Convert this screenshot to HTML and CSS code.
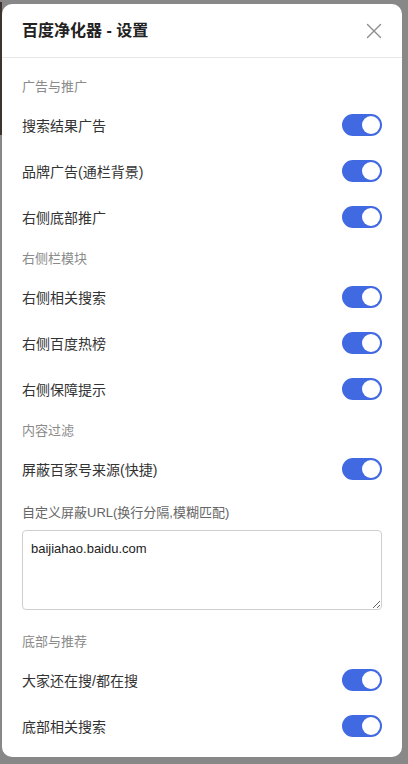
FILE: index.html
```html
<!DOCTYPE html>
<html lang="zh-CN">
<head>
    <meta charset="UTF-8">
    <meta name="viewport" content="width=device-width, initial-scale=1.0">
    <title>百度净化器 - 设置</title>
    <link rel="stylesheet" href="styles.css">
</head>
<body>
    <div class="modal">
        <div class="modal-header">
            <h1>百度净化器 - 设置</h1>
            <button class="close-btn" aria-label="关闭">
                <svg width="16" height="16" viewBox="0 0 16 16">
                    <path d="M1.5 1.5 L14.5 14.5 M14.5 1.5 L1.5 14.5" stroke="#8c8c8c" stroke-width="1.4" fill="none" stroke-linecap="round"/>
                </svg>
            </button>
        </div>

        <div class="modal-body">
            <div class="section-title">广告与推广</div>
            <div class="row"><span>搜索结果广告</span><span class="switch on"></span></div>
            <div class="row"><span>品牌广告(通栏背景)</span><span class="switch on"></span></div>
            <div class="row"><span>右侧底部推广</span><span class="switch on"></span></div>

            <div class="section-title">右侧栏模块</div>
            <div class="row"><span>右侧相关搜索</span><span class="switch on"></span></div>
            <div class="row"><span>右侧百度热榜</span><span class="switch on"></span></div>
            <div class="row"><span>右侧保障提示</span><span class="switch on"></span></div>

            <div class="section-title">内容过滤</div>
            <div class="row"><span>屏蔽百家号来源(快捷)</span><span class="switch on"></span></div>
            <label class="field-label" for="urls">自定义屏蔽URL(换行分隔,模糊匹配)</label>
            <textarea id="urls">baijiahao.baidu.com</textarea>

            <div class="section-title">底部与推荐</div>
            <div class="row"><span>大家还在搜/都在搜</span><span class="switch on"></span></div>
            <div class="row"><span>底部相关搜索</span><span class="switch on"></span></div>
        </div>
    </div>
</body>
</html>
```

FILE: styles.css
```css
body {
    margin: 0;
    font-family: "Liberation Sans", "Noto Sans CJK SC", sans-serif;
    background: linear-gradient(#3b3430, #3b3430) no-repeat 0 2px / 2px 133px, #888888;
    min-height: 764px;
    overflow: hidden;
}
.modal {
    width: 400px;
    margin: 4px 0 0 2px;
    background-color: #ffffff;
    border-radius: 10px;
}
.modal-header {
    height: 53px;
    padding: 0 20px;
    display: flex;
    align-items: center;
    justify-content: space-between;
    border-bottom: 1px solid #e8e8e8;
}
.modal-header h1 {
    margin: 0;
    font-size: 16px;
    font-weight: bold;
    line-height: 22px;
    color: #222222;
}
.close-btn {
    border: none;
    background: none;
    padding: 0;
    width: 16px;
    height: 16px;
    cursor: pointer;
    display: flex;
}
.modal-body {
    padding: 10px 20px 8px;
}
.section-title {
    font-size: 13px;
    line-height: 18px;
    color: #8a8a8a;
    margin: 10px 0 6px;
}
.row {
    height: 46px;
    display: flex;
    align-items: center;
    justify-content: space-between;
    font-size: 14px;
    color: #333333;
}
.switch {
    width: 40px;
    height: 22px;
    border-radius: 11px;
    background-color: #cccccc;
    position: relative;
}
.switch.on {
    background-color: #4169e1;
}
.switch::after {
    content: "";
    position: absolute;
    top: 2px;
    left: 2px;
    width: 18px;
    height: 18px;
    border-radius: 50%;
    background-color: #ffffff;
}
.switch.on::after {
    left: 20px;
}
.field-label {
    display: block;
    margin-top: 12px;
    font-size: 13px;
    line-height: 18px;
    color: #666666;
}
textarea {
    display: block;
    box-sizing: border-box;
    width: 100%;
    height: 80px;
    margin: 8px 0 23px;
    padding: 9px 8px;
    border: 1px solid #cfcfcf;
    border-radius: 4px;
    font-family: "Liberation Sans", "Noto Sans CJK SC", sans-serif;
    font-size: 13px;
    line-height: 18px;
    color: #222222;
}
```
